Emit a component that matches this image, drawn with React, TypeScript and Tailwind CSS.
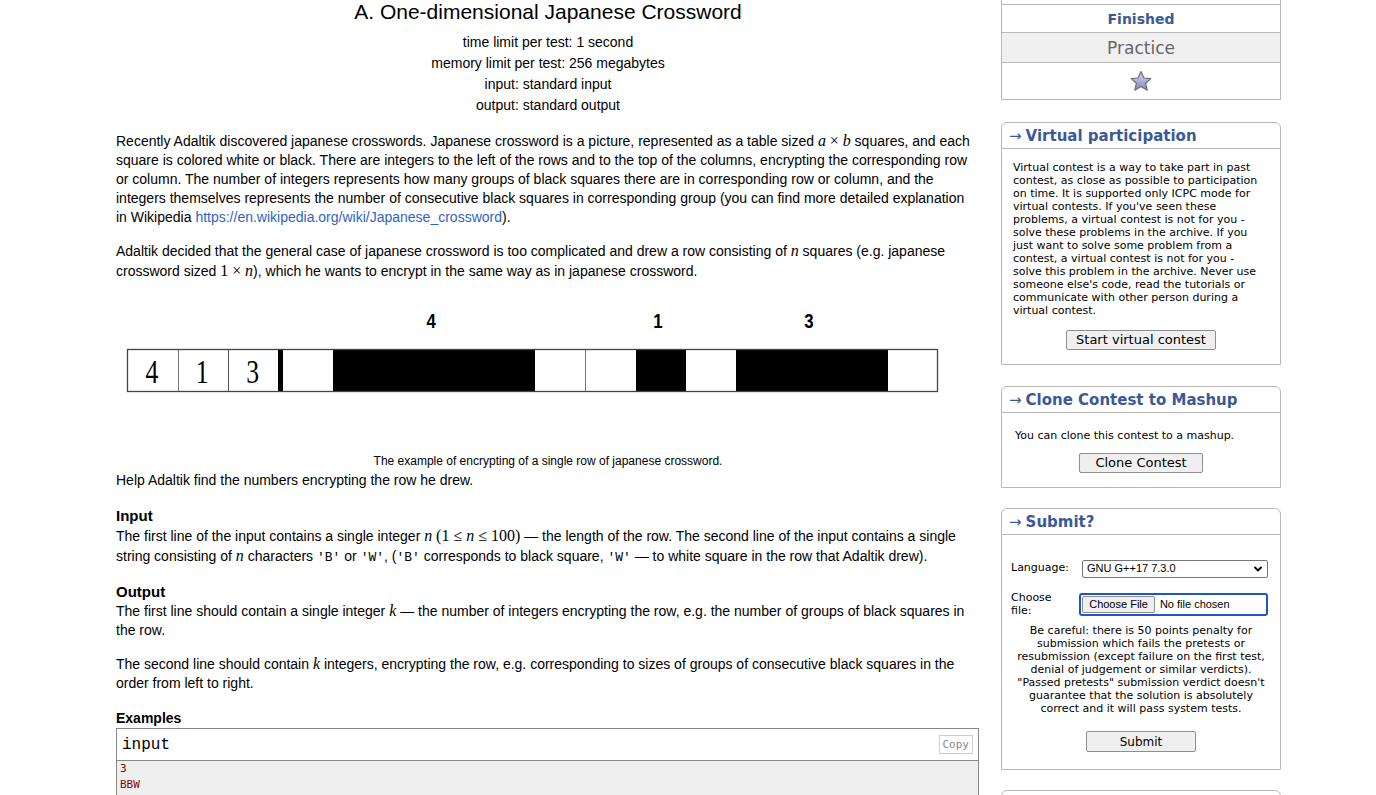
import React from 'react';

const cells = [0, 1, 1, 1, 1, 0, 0, 1, 0, 1, 1, 1, 0];
const cellX0 = 167;
const cellW = (822 - 167) / 13;

// runs of black cells, with the clue that sits above each
const runs = [
  { start: 1, len: 4 },
  { start: 7, len: 1 },
  { start: 9, len: 3 },
];

const CrosswordPicture = () => (
  <svg width="864" height="168" viewBox="0 0 864 168" className="block">
    {runs.map((r) => (
      <text
        key={'n' + r.start}
        transform={`translate(${cellX0 + (r.start + r.len / 2) * cellW - 3} 47) scale(0.8 1)`}
        textAnchor="middle"
        fontFamily="Liberation Sans Narrow, Liberation Sans, Arial, sans-serif"
        fontWeight="700"
        fontSize="21"
        fill="#000"
      >
        {r.len}
      </text>
    ))}
    <rect x="11" y="68" width="811" height="43" fill="#fff" />
    {['4', '1', '3'].map((n, i) => (
      <text
        key={i}
        transform={`translate(${11 + i * 50.3 + 25} 102) scale(0.78 1)`}
        textAnchor="middle"
        fontFamily="Liberation Serif, Times New Roman, serif"
        fontSize="33"
        fill="#000"
      >
        {n}
      </text>
    ))}
    <line x1="62.5" y1="68" x2="62.5" y2="111" stroke="#777" strokeWidth="1" />
    <line x1="112.5" y1="68" x2="112.5" y2="111" stroke="#555" strokeWidth="1" />
    {cells.map((b, i) =>
      i > 0 && !b && !cells[i - 1] ? (
        <line
          key={'l' + i}
          x1={Math.round(cellX0 + i * cellW) + 0.5}
          y1="68"
          x2={Math.round(cellX0 + i * cellW) + 0.5}
          y2="111"
          stroke="#777"
          strokeWidth="1"
        />
      ) : null,
    )}
    {runs.map((r) => (
      <rect
        key={'r' + r.start}
        x={Math.round(cellX0 + r.start * cellW)}
        y="68"
        width={Math.round(cellX0 + (r.start + r.len) * cellW) - Math.round(cellX0 + r.start * cellW)}
        height="43"
        fill="#000"
      />
    ))}
    <rect x="162" y="68" width="5" height="43" fill="#000" />
    <rect x="11.5" y="68.5" width="810" height="42" fill="none" stroke="#444" strokeWidth="1.3" />
  </svg>
);

const Star = () => (
  <svg width="24" height="23" viewBox="0 0 24 23">
    <defs>
      <linearGradient id="sg" x1="0" y1="0" x2="0" y2="1">
        <stop offset="0" stopColor="#d9d9ef" />
        <stop offset="1" stopColor="#8686b8" />
      </linearGradient>
    </defs>
    <path
      d="M12 1.5 L14.9 8 L21.8 8.6 L16.6 13.2 L18.2 20.2 L12 16.5 L5.8 20.2 L7.4 13.2 L2.2 8.6 L9.1 8 Z"
      fill="url(#sg)"
      stroke="#6a6a80"
      strokeWidth="1.2"
      strokeLinejoin="round"
    />
  </svg>
);

const SideBox = ({ title, children }: { title: string; children: React.ReactNode }) => (
  <div className="border border-[#b9b9b9] rounded-t-[6px] bg-white">
    <div className="h-[26px] border-b border-[#b9b9b9] pl-[7px] text-[15px] leading-[26px] text-[#3b5998] whitespace-nowrap">
      <span className="font-normal mr-[4px]">→</span>
      <span className="font-bold">{title}</span>
    </div>
    {children}
  </div>
);

const Btn = ({ label, w }: { label: string; w: string }) => (
  <button
    className={`${w} h-[20px] border border-[#8f8f8f] rounded-[2px] bg-[#efefef] text-[13px] leading-[18px] text-black`}
  >
    {label}
  </button>
);

const M = ({ children }: { children: React.ReactNode }) => (
  <span className="font-['Liberation_Serif',serif] text-[16px] leading-none">{children}</span>
);
const I = ({ children }: { children: React.ReactNode }) => (
  <span className="font-['Liberation_Serif',serif] italic text-[16px] leading-none">{children}</span>
);
const Tt = ({ children }: { children: React.ReactNode }) => (
  <span className="font-['Liberation_Mono',monospace] text-[13px] leading-none">{children}</span>
);

export default function App() {
  return (
    <div className="h-[795px] overflow-hidden bg-white text-black flex pl-[116px] font-['Liberation_Sans',Arial,sans-serif]">
      <main className="w-[864px] shrink-0">
        <div className="text-center text-[21px] leading-[24px]">A. One-dimensional Japanese Crossword</div>
        <div className="mt-[8px] text-center text-[14px] leading-[21px]">
          <div>time limit per test: 1 second</div>
          <div>memory limit per test: 256 megabytes</div>
          <div>input: standard input</div>
          <div>output: standard output</div>
        </div>

        <p className="mt-[16px] max-w-[858px] text-[14px] leading-[19px]">
          Recently Adaltik discovered japanese crosswords. Japanese crossword is a picture, represented as a table
          sized <I>a</I> <M>×</M> <I>b</I> squares, and each square is colored white or black. There are integers to the left of the
          rows and to the top of the columns, encrypting the corresponding row or column. The number of integers
          represents how many groups of black squares there are in corresponding row or column, and the integers
          themselves represents the number of consecutive black squares in corresponding group (you can find more
          detailed explanation in Wikipedia{' '}
          <span className="text-[#2f64c4]">https://en.wikipedia.org/wiki/Japanese_crossword</span>).
        </p>
        <p className="mt-[14px] text-[14px] leading-[20px]">
          Adaltik decided that the general case of japanese crossword is too complicated and drew a row consisting
          of <I>n</I> squares (e.g. japanese crossword sized <M>1</M> <M>×</M> <I>n</I>), which he wants to encrypt in the same
          way as in japanese crossword.
        </p>

        <CrosswordPicture />
        <div className="mt-[5px] text-center text-[12px] leading-[14px]">
          The example of encrypting of a single row of japanese crossword.
        </div>
        <p className="mt-[3px] text-[14px] leading-[19px]">Help Adaltik find the numbers encrypting the row he drew.</p>

        <div className="mt-[16px] text-[15px] font-bold leading-[20px]">Input</div>
        <p className="text-[14px] leading-[20px]">
          The first line of the input contains a single integer <I>n</I> <M>(1 ≤ </M><I>n</I><M> ≤ 100)</M> — the length of
          the row. The second line of the input contains a single string consisting of <I>n</I> characters{' '}
          <Tt>'B'</Tt> or <Tt>'W'</Tt>, (<Tt>'B'</Tt> corresponds to black square, <Tt>'W'</Tt> — to white square in
          the row that Adaltik drew).
        </p>

        <div className="mt-[16px] text-[15px] font-bold leading-[20px]">Output</div>
        <p className="text-[14px] leading-[19px]">
          The first line should contain a single integer <I>k</I> — the number of integers encrypting the row, e.g.
          the number of groups of black squares in the row.
        </p>
        <p className="mt-[15px] text-[14px] leading-[19px]">
          The second line should contain <I>k</I> integers, encrypting the row, e.g. corresponding to sizes of groups
          of consecutive black squares in the order from left to right.
        </p>

        <div className="mt-[16px] text-[14px] font-bold leading-[19px]">Examples</div>
        <div className="w-[863px] border border-[#888]">
          <div className="h-[32px] flex items-center justify-between pl-[5px] pr-[5px] border-b border-[#888]">
            <span className="font-['Liberation_Mono',monospace] text-[16px]">input</span>
            <span className="border border-[#ccc] px-[3px] h-[19px] leading-[17px] text-[11px] text-[#888] font-['DejaVu_Sans_Mono',monospace]">
              Copy
            </span>
          </div>
          <div className="bg-[#efefef] pl-[3px] pt-0 pb-[20px] font-['DejaVu_Sans_Mono',monospace] text-[11px] leading-[16px] text-[#8b0000]">
            <div>3</div>
            <div>BBW</div>
          </div>
        </div>
      </main>

      <aside className="ml-[21px] w-[280px] shrink-0 font-['DejaVu_Sans',Verdana,sans-serif]">
        <div className="border border-[#b9b9b9] border-t-0 bg-white">
          <div className="mt-[-23px] h-[28px] border-b border-[#b9b9b9] text-center text-[14px] font-bold leading-[26px] text-[#3b5998] whitespace-nowrap">
            Codeforces Round #374 (Div. 2)
          </div>
          <div className="h-[28px] border-b border-[#b9b9b9] text-center text-[14px] font-bold leading-[28px] text-[#3b5998]">
            Finished
          </div>
          <div className="h-[30px] border-b border-[#b9b9b9] bg-[#f0f0f0] text-center text-[17px] leading-[30px] text-[#666]">
            Practice
          </div>
          <div className="h-[36px] flex items-center justify-center">
            <Star />
          </div>
        </div>

        <div className="mt-[22px]">
          <SideBox title="Virtual participation">
            <div className="pl-[11px] pt-[12px] text-[11px] leading-[13px] whitespace-nowrap">
              Virtual contest is a way to take part in past
              <br />
              contest, as close as possible to participation
              <br />
              on time. It is supported only ICPC mode for
              <br />
              virtual contests. If you've seen these
              <br />
              problems, a virtual contest is not for you -
              <br />
              solve these problems in the archive. If you
              <br />
              just want to solve some problem from a
              <br />
              contest, a virtual contest is not for you -
              <br />
              solve this problem in the archive. Never use
              <br />
              someone else's code, read the tutorials or
              <br />
              communicate with other person during a
              <br />
              virtual contest.
            </div>
            <div className="mt-[13px] pb-[14px] flex justify-center">
              <Btn label="Start virtual contest" w="w-[150px]" />
            </div>
          </SideBox>
        </div>

        <div className="mt-[21px]">
          <SideBox title="Clone Contest to Mashup">
            <div className="pl-[13px] pt-[15px] text-[11px] leading-[15px]">You can clone this contest to a mashup.</div>
            <div className="mt-[10px] pb-[14px] flex justify-center">
              <Btn label="Clone Contest" w="w-[124px]" />
            </div>
          </SideBox>
        </div>

        <div className="mt-[20px]">
          <SideBox title="Submit?">
            <div className="pt-[25px] pl-[9px] pr-[12px] text-[11px]">
              <div className="flex items-center h-[17px]">
                <span className="w-[71px]">Language:</span>
                <div className="w-[186px] h-[18px] border border-[#767676] rounded-[2px] flex items-center justify-between pl-[4px] pr-[4px] font-['Liberation_Sans',Arial,sans-serif] text-[11px]">
                  <span>GNU G++17 7.3.0</span>
                  <svg width="10" height="8" viewBox="0 0 10 8">
                    <path d="M1.5 2 L5 5.5 L8.5 2" fill="none" stroke="#000" strokeWidth="1.8" />
                  </svg>
                </div>
              </div>
              <div className="mt-[14px] flex items-center">
                <span className="w-[69px] leading-[13px]">
                  Choose
                  <br />
                  file:
                </span>
                <div className="w-[191px] h-[23px] border-2 border-[#1f56c4] rounded-[3px] flex items-center pl-[1px] font-['Liberation_Sans',Arial,sans-serif] text-[11px]">
                  <span className="h-[17px] px-[6px] border border-[#8f8f8f] rounded-[2px] bg-[#efefef] leading-[15px]">
                    Choose File
                  </span>
                  <span className="ml-[5px]">No file chosen</span>
                </div>
              </div>
              <div className="mt-[7px] text-center leading-[13px] whitespace-nowrap pl-[3px]">
                Be careful: there is 50 points penalty for
                <br />
                submission which fails the pretests or
                <br />
                resubmission (except failure on the first test,
                <br />
                denial of judgement or similar verdicts).
                <br />
                "Passed pretests" submission verdict doesn't
                <br />
                guarantee that the solution is absolutely
                <br />
                correct and it will pass system tests.
              </div>
            </div>
            <div className="mt-[16px] pb-[17px] flex justify-center">
              <button className="w-[110px] h-[21px] border border-[#8f8f8f] rounded-[2px] bg-[#efefef] text-[12px] text-black">
                Submit
              </button>
            </div>
          </SideBox>
        </div>

        <div className="mt-[20px] h-[40px] border border-[#b9b9b9] rounded-t-[6px]" />
      </aside>
    </div>
  );
}
